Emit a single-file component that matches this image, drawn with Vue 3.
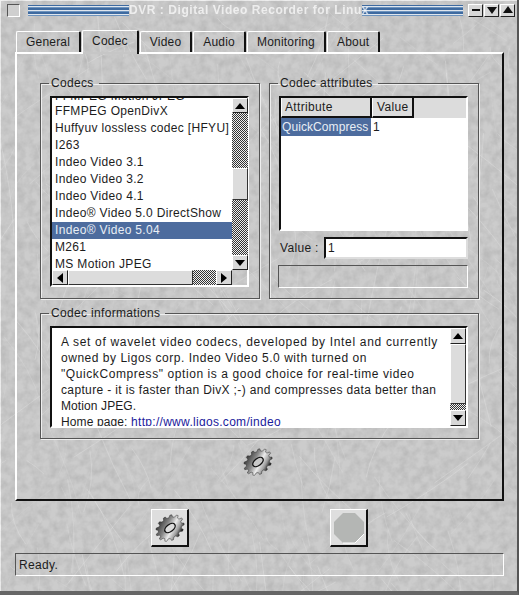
<script setup>
// seeded scratches for the brushed-metal backdrop
let seed = 17
const rnd = () => {
  seed = (seed * 16807) % 2147483647
  return seed / 2147483647
}

const scratches = []
for (let i = 0; i < 340; i++) {
  const x = rnd() * 519
  const y = rnd() * 595
  const len = 20 + rnd() * 90
  const a = 1.1 + (rnd() - 0.5) * 1.1 + (rnd() > 0.7 ? 1.1 : 0)
  const bend = (rnd() - 0.5) * 20
  const x2 = x + Math.cos(a) * len
  const y2 = y + Math.sin(a) * len
  scratches.push({
    d: `M${x.toFixed(1)} ${y.toFixed(1)}Q${((x + x2) / 2 + bend).toFixed(1)} ${((y + y2) / 2).toFixed(1)} ${x2.toFixed(1)} ${y2.toFixed(1)}`,
    o: (0.12 + rnd() * 0.3).toFixed(2)
  })
}

const tabs = ['General', 'Codec', 'Video', 'Audio', 'Monitoring', 'About']

const codecs = [
  'FFMPEG Motion JPEG',
  'FFMPEG OpenDivX',
  'Huffyuv lossless codec [HFYU]',
  'I263',
  'Indeo Video 3.1',
  'Indeo Video 3.2',
  'Indeo Video 4.1',
  'Indeo® Video 5.0 DirectShow',
  'Indeo® Video 5.04',
  'M261',
  'MS Motion JPEG'
]

// the reference font has other advances, so each line gets its own tracking
const infoLines = [
  { text: 'A set of wavelet video codecs, developed by Intel and currently', track: 0.68 },
  { text: 'owned by Ligos corp. Indeo Video 5.0 with turned on', track: 0.52 },
  { text: '"QuickCompress" option is a good choice for real-time video', track: 0.58 },
  { text: 'capture - it is faster than DivX ;-) and compresses data better than', track: 0.36 },
  { text: 'Motion JPEG.', track: 0.1 }
]

// gear outline, drawn round and then squashed by the svg transform
const gearPath = () => {
  const teeth = 13
  const out = 16
  const inn = 13.2
  const pts = []
  for (let i = 0; i < teeth; i++) {
    const step = (Math.PI * 2) / teeth
    const t = i * step
    const spots = [[-0.32, inn], [-0.14, out], [0.14, out], [0.32, inn]]
    for (const [k, r] of spots) {
      pts.push(`${(Math.cos(t + k * step) * r).toFixed(2)} ${(Math.sin(t + k * step) * r).toFixed(2)}`)
    }
  }
  return 'M' + pts.join('L') + 'Z'
}
const gear = gearPath()
</script>

<template>
  <div class="window">
    <svg class="texture" width="519" height="595">
      <defs>
        <filter id="grain" color-interpolation-filters="sRGB">
          <feTurbulence type="fractalNoise" baseFrequency="0.12" numOctaves="3" seed="4" />
          <feColorMatrix values="1.3 0 0 0 0.12  1.3 0 0 0 0.12  1.3 0 0 0 0.12  0 0 0 0 0.1" />
        </filter>
      </defs>
      <rect width="519" height="595" filter="url(#grain)" />
      <path v-for="(s, i) in scratches" :key="i" :d="s.d" fill="none" stroke="#e2e2e2" :stroke-opacity="s.o" />
    </svg>

    <div class="titlebar">
      <span class="close"></span>
      <span class="stripes"></span>
      <span class="title">DVR : Digital Video Recorder for Linux</span>
      <span class="stripes"></span>
      <span class="winbtn"><svg width="10" height="10"><rect x="1" y="4" width="8" height="2" fill="#111" /></svg></span>
      <span class="winbtn"><svg width="10" height="10"><path d="M0 2H10L5 9Z" fill="#111" /></svg></span>
      <span class="winbtn"><svg width="10" height="10"><path d="M0 8H10L5 1Z" fill="#111" /></svg></span>
    </div>

    <div class="tabs">
      <div v-for="t in tabs" :key="t" class="tab" :class="{ active: t === 'Codec' }">{{ t }}</div>
    </div>

    <div class="panel">
      <div class="top">
        <fieldset class="group codecs">
          <legend>Codecs</legend>
          <div class="inset listbox">
            <div class="list">
              <div class="rows">
                <div v-for="c in codecs" :key="c" class="row" :class="{ sel: c === 'Indeo® Video 5.04' }">{{ c }}</div>
              </div>
            </div>
            <div class="vbar listv">
              <div class="arrow"><svg width="10" height="8"><path d="M0 7H10L5 1Z" fill="#000" /></svg></div>
              <div class="dither fill1"></div>
              <div class="thumb thumbv"></div>
              <div class="dither fill2"></div>
              <div class="arrow"><svg width="10" height="8"><path d="M0 1H10L5 7Z" fill="#000" /></svg></div>
            </div>
            <div class="hbar">
              <div class="arrow harrow"><svg width="8" height="10"><path d="M7 0V10L1 5Z" fill="#000" /></svg></div>
              <div class="thumb thumbh"></div>
              <div class="dither fill3"></div>
              <div class="arrow harrow"><svg width="8" height="10"><path d="M1 0V10L7 5Z" fill="#000" /></svg></div>
            </div>
          </div>
        </fieldset>

        <fieldset class="group attrs">
          <legend>Codec attributes</legend>
          <div class="inset table">
            <div class="thead">
              <div class="th th1">Attribute</div>
              <div class="th th2">Value</div>
            </div>
            <div class="tr">
              <div class="td1">QuickCompress</div>
              <div class="td2">1</div>
            </div>
          </div>
          <div class="valuerow">
            <span class="vlabel">Value :</span>
            <div class="inset input">1</div>
          </div>
          <div class="hint"></div>
        </fieldset>
      </div>

      <fieldset class="group info">
        <legend>Codec informations</legend>
        <div class="inset infobox">
          <div class="infotext">
            <div v-for="l in infoLines" :key="l.text" :style="{ letterSpacing: l.track + 'px' }">{{ l.text }}</div>
            <div class="homeline">Home page: <span class="link">http://www.ligos.com/indeo</span></div>
          </div>
          <div class="vbar infov">
            <div class="arrow"><svg width="10" height="8"><path d="M0 7H10L5 1Z" fill="#000" /></svg></div>
            <div class="thumb thumbi"></div>
            <div class="dither fill4"></div>
            <div class="arrow"><svg width="10" height="8"><path d="M0 1H10L5 7Z" fill="#000" /></svg></div>
          </div>
        </div>
      </fieldset>

      <div class="gearrow">
        <svg width="32" height="32" viewBox="-16 -16 32 32">
          <defs>
            <linearGradient id="steel" gradientUnits="userSpaceOnUse" x1="-9" y1="-13" x2="7" y2="14">
              <stop offset="0" stop-color="#3a3a3a" />
              <stop offset="0.35" stop-color="#8a8a8a" />
              <stop offset="0.6" stop-color="#ececec" />
              <stop offset="0.82" stop-color="#9a9a9a" />
              <stop offset="1" stop-color="#141414" />
            </linearGradient>
          </defs>
          <g transform="rotate(-38)">
            <g transform="scale(0.96 0.74)">
              <path :d="gear" fill="url(#steel)" stroke="#222" stroke-width="0.5" />
            </g>
            <ellipse rx="6" ry="3.5" fill="#c8c8c8" stroke="#111" stroke-width="1.4" />
          </g>
        </svg>
      </div>
    </div>

    <div class="actions">
      <div class="bigbtn">
        <svg width="32" height="32" viewBox="-16 -16 32 32">
          <g transform="rotate(-38)">
            <g transform="scale(0.96 0.74)">
              <path :d="gear" fill="url(#steel)" stroke="#222" stroke-width="0.5" />
            </g>
            <ellipse rx="6" ry="3.5" fill="#dcdcdc" stroke="#111" stroke-width="1.4" />
          </g>
        </svg>
      </div>
      <div class="bigbtn">
        <svg width="32" height="32" viewBox="0 0 32 32">
          <path d="M10 1H22L31 10V22L22 31H10L1 22V10Z" fill="#b4b6b4" />
          <path d="M31 22L22 31H10" fill="none" stroke="#fff" stroke-width="1" />
        </svg>
      </div>
    </div>

    <div class="status">Ready.</div>
  </div>
</template>

<style scoped>
* {
  box-sizing: border-box;
}

.window {
  position: relative;
  isolation: isolate;
  width: 519px;
  height: 595px;
  overflow: hidden;
  background: #c6c6c6;
  color: #1c1c1c;
  font-family: "Liberation Sans", Arial, sans-serif;
  font-size: 12px;
  letter-spacing: 0.33px;
  border-right: 2px solid #555;
  border-bottom: 4px solid #666;
  box-shadow: inset 1px 1px 0 #eee;
}

.texture {
  position: absolute;
  left: 0;
  top: 0;
  z-index: -1;
}

.titlebar {
  display: flex;
  align-items: center;
  height: 20px;
  padding-left: 7px;
}

.close {
  width: 13px;
  height: 13px;
  margin-right: 8px;
  background: #cfcfcf;
  border: 1px solid;
  border-color: #555 #fff #fff #555;
}

.stripes {
  width: 101px;
  height: 11px;
  background: repeating-linear-gradient(#3e6aa0 0 1px, #dfe6ee 1px 2px, #6d93bd 2px 3px, #3e6aa0 3px 4px);
}

.title {
  width: 233px;
  text-align: center;
  color: #fff;
  font-weight: bold;
  font-size: 12px;
  letter-spacing: 0.55px;
  white-space: nowrap;
  opacity: 0.7;
}

.winbtn {
  display: flex;
  align-items: center;
  justify-content: center;
  width: 15px;
  height: 13px;
  margin-left: 1px;
  background: #d8d8d8;
  border: 1px solid;
  border-color: #fff #222 #222 #fff;
}

.winbtn:nth-of-type(5) {
  margin-left: 5px;
}

.tabs {
  display: flex;
  align-items: flex-end;
  height: 32px;
  padding: 0 0 0 16px;
  letter-spacing: 0.2px;
}

.tab {
  height: 21px;
  padding: 3px 9px 0;
  margin-right: 1px;
  border: 1px solid;
  border-width: 1px 2px 0 1px;
  border-color: #fff #111 #fff #fff;
  border-radius: 2px 2px 0 0;
}

.tab.active {
  position: relative;
  height: 24px;
  margin-bottom: -2px;
  padding-top: 3px;
  background: linear-gradient(transparent 21px, #c6c6c6 0);
  z-index: 1;
}

.panel {
  width: 489px;
  height: 449px;
  margin-left: 15px;
  padding: 23px 23px 0;
  border: 2px solid;
  border-color: #fff #111 #111 #fff;
}

.top {
  display: flex;
  gap: 9px;
}

.group {
  margin: 0;
  min-width: 0;
  padding: 6px 10px 10px 9px;
  border: 1px solid #555;
  box-shadow: 1px 1px 0 #eee, inset 1px 1px 0 #eee;
}

legend {
  margin-left: -1px;
  padding: 0 5px 0 2px;
  height: 13px;
  line-height: 13px;
}

.codecs {
  width: 220px;
}

.attrs {
  width: 210px;
}

.inset {
  border: 2px solid;
  border-color: #111 #fff #fff #111;
  background: #fff;
}

.listbox {
  display: grid;
  grid-template-columns: 180px 16px;
  grid-template-rows: 172px 15px;
  height: 191px;
  width: 199px;
  background: transparent;
}

.list {
  overflow: hidden;
  background: #fff;
}

.rows {
  margin-top: -12px;
}

.row {
  height: 17px;
  line-height: 17px;
  padding-left: 3px;
  white-space: nowrap;
}

/* the half scrolled row shows its lower edge under the frame */
.row:first-child {
  line-height: 20px;
}

.row.sel {
  background: #4d6c9e;
  color: #e8eef5;
}

.vbar {
  display: flex;
  flex-direction: column;
}

.arrow {
  display: flex;
  align-items: center;
  justify-content: center;
  flex: none;
  height: 15px;
  background: #d8d8d8;
  border: 1px solid;
  border-color: #fff #222 #222 #fff;
}

.harrow {
  width: 16px;
  height: 15px;
}

.dither {
  background: repeating-conic-gradient(#333 0 25%, #eee 0 50%) 0 0 / 2px 2px;
}

.thumb {
  background: #dcdcdc;
  border: 1px solid;
  border-color: #fff #333 #333 #fff;
}

.fill1 {
  height: 55px;
}

.thumbv {
  height: 32px;
}

.fill2 {
  flex: 1;
}

.hbar {
  display: flex;
}

.thumbh {
  width: 125px;
}

.fill3 {
  flex: 1;
}

.table {
  height: 135px;
}

.thead {
  display: flex;
  height: 20px;
  background: #dcdcdc;
}

.th {
  height: 20px;
  line-height: 19px;
  border-right: 2px solid #111;
  border-bottom: 2px solid #111;
  border-left: 1px solid #fff;
}

.th1 {
  width: 91px;
  padding-left: 3px;
}

.th2 {
  width: 42px;
  padding-left: 4px;
}

.tr {
  display: flex;
  height: 18px;
  line-height: 19px;
}

.td1 {
  width: 90px;
  padding-left: 1px;
  letter-spacing: 0.08px;
  white-space: nowrap;
  background: #4d6c9e;
  color: #e8eef5;
}

.td2 {
  padding-left: 2px;
}

.valuerow {
  display: flex;
  align-items: center;
  margin-top: 6px;
  height: 22px;
}

.vlabel {
  width: 45px;
  padding-left: 1px;
}

.input {
  flex: 1;
  height: 22px;
  line-height: 18px;
  padding-left: 2px;
  border-color: #111 #ddd #ddd #111;
}

.hint {
  height: 23px;
  margin-top: 6px;
  margin-left: -1px;
  border: 1px solid;
  border-color: #555 #fff #fff #555;
}

.info {
  width: 439px;
  margin-top: 8px;
}

.infobox {
  display: flex;
  height: 102px;
  width: 418px;
}

.infotext {
  flex: 1;
  height: 98px;
  overflow: hidden;
  padding: 6px 0 0 9px;
  line-height: 16px;
  white-space: nowrap;
}

.homeline {
  letter-spacing: 0.12px;
}

.link {
  color: #1a1a9c;
  letter-spacing: 0.3px;
  text-decoration: underline;
}

.infov {
  width: 16px;
  flex: none;
}

.infov .arrow {
  height: 16px;
}

.thumbi {
  height: 60px;
}

.fill4 {
  flex: 1;
}

.gearrow {
  display: flex;
  justify-content: center;
  margin-top: 7px;
  padding-right: 3px;
}

.actions {
  display: flex;
  gap: 141px;
  height: 52px;
  padding: 8px 0 0 151px;
}

.bigbtn {
  display: flex;
  align-items: center;
  justify-content: center;
  width: 38px;
  height: 38px;
  background: #dedede;
  border: 1px solid;
  border-width: 1px 2px 2px 1px;
  border-color: #fff #111 #111 #fff;
}

.status {
  width: 489px;
  height: 23px;
  margin-left: 15px;
  padding-left: 3px;
  line-height: 22px;
  border: 1px solid;
  border-color: #555 #fff #fff #555;
}
</style>
